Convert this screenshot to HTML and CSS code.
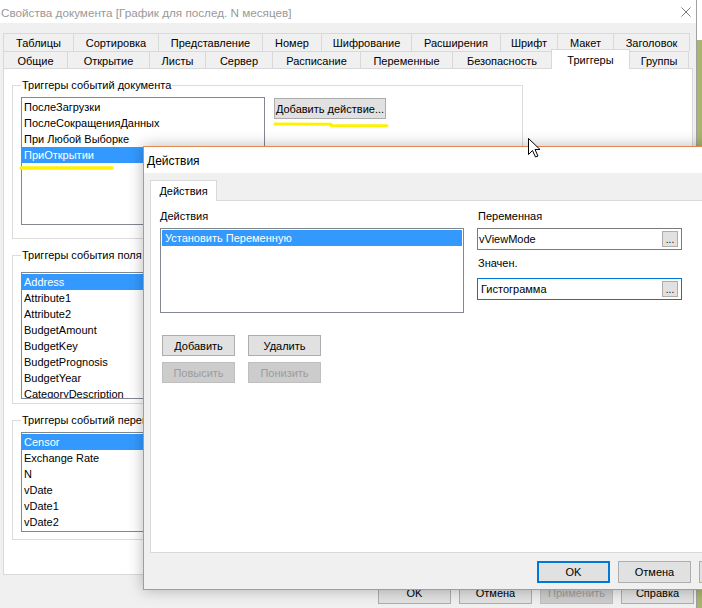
FILE: index.html
```html
<!DOCTYPE html>
<html lang="ru">
<head>
<meta charset="utf-8">
<title>Свойства документа</title>
<link rel="stylesheet" href="styles.css">
</head>
<body>
<div class="main">
  <div class="titlebar">
    <span class="title">Свойства документа [График для послед. N месяцев]</span>
    <svg class="close" width="10" height="10" viewBox="0 0 10 10"><path d="M0.5 0.5 L9.5 9.5 M9.5 0.5 L0.5 9.5" stroke="#7a7a7a" stroke-width="1" fill="none"/></svg>
  </div>
  <div class="mbody">
    <div class="tabrow row1">
      <div class="tab">Таблицы</div>
      <div class="tab">Сортировка</div>
      <div class="tab">Представление</div>
      <div class="tab">Номер</div>
      <div class="tab">Шифрование</div>
      <div class="tab">Расширения</div>
      <div class="tab">Шрифт</div>
      <div class="tab">Макет</div>
      <div class="tab last">Заголовок</div>
    </div>
    <div class="tabrow row2">
      <div class="tab">Общие</div>
      <div class="tab">Открытие</div>
      <div class="tab">Листы</div>
      <div class="tab">Сервер</div>
      <div class="tab">Расписание</div>
      <div class="tab">Переменные</div>
      <div class="tab">Безопасность</div>
      <div class="tab active">Триггеры</div>
      <div class="tab last">Группы</div>
    </div>
    <div class="panel">
      <fieldset class="grp g1">
        <legend>Триггеры событий документа</legend>
        <div class="grow">
          <div class="list l1">
            <div class="item">ПослеЗагрузки</div>
            <div class="item">ПослеСокращенияДанных</div>
            <div class="item">При Любой Выборке</div>
            <div class="item hl">ПриОткрытии</div>
          </div>
          <button class="btn addact">Добавить действие...</button>
        </div>
      </fieldset>
      <fieldset class="grp g2">
        <legend>Триггеры события поля</legend>
        <div class="list l2">
          <div class="item hl">Address</div>
          <div class="item">Attribute1</div>
          <div class="item">Attribute2</div>
          <div class="item">BudgetAmount</div>
          <div class="item">BudgetKey</div>
          <div class="item">BudgetPrognosis</div>
          <div class="item">BudgetYear</div>
          <div class="item">CategoryDescription</div>
        </div>
      </fieldset>
      <fieldset class="grp g3">
        <legend>Триггеры событий переменных</legend>
        <div class="list l3">
          <div class="item hl">Censor</div>
          <div class="item">Exchange Rate</div>
          <div class="item">N</div>
          <div class="item">vDate</div>
          <div class="item">vDate1</div>
          <div class="item">vDate2</div>
        </div>
      </fieldset>
    </div>
    <div class="mbuttons">
      <button class="btn mb">OK</button>
      <button class="btn mb">Отмена</button>
      <button class="btn mb dis">Применить</button>
      <button class="btn mb">Справка</button>
    </div>
  </div>
</div>

<div class="dlg">
  <div class="dtitle">Действия</div>
  <div class="dbody">
    <div class="dtabs"><div class="dtab">Действия</div></div>
    <div class="dpanel">
      <div class="dcols">
        <div class="dleft">
          <div class="lbl">Действия</div>
          <div class="list dlist">
            <div class="item hl">Установить Переменную</div>
          </div>
          <div class="dbtns">
            <button class="btn db">Добавить</button>
            <button class="btn db">Удалить</button>
            <button class="btn db dis">Повысить</button>
            <button class="btn db dis">Понизить</button>
          </div>
        </div>
        <div class="dright">
          <div class="lbl">Переменная</div>
          <div class="field f1"><span>vViewMode</span><span class="ell">...</span></div>
          <div class="lbl l2lbl">Значен.</div>
          <div class="field f2"><span>Гистограмма</span><span class="ell">...</span></div>
        </div>
      </div>
    </div>
    <div class="dbuttons">
      <button class="btn dfb ok">OK</button>
      <button class="btn dfb">Отмена</button>
      <button class="btn dfb" aria-label="Справка"></button>
    </div>
  </div>
</div>

<svg class="overlay" width="702" height="608" viewBox="0 0 702 608">
  <path d="M21 168 L112 168" stroke="#fff200" stroke-width="3.5" stroke-linecap="round" fill="none"/>
  <path d="M275 124 L331 124.3 M331 125.6 L387 125.8" stroke="#fff200" stroke-width="3" stroke-linecap="round" fill="none"/>
  <path d="M528.5 138.5 L528.5 154.5 L532.5 150.5 L535.5 157 L538 156 L535 149.5 L540 149.5 Z" fill="#fff" stroke="#000" stroke-width="1" stroke-linejoin="miter"/>
</svg>
</body>
</html>
```

FILE: styles.css
```css
* { box-sizing: border-box; }
html, body { margin: 0; padding: 0; }
body {
  width: 702px;
  height: 608px;
  overflow: hidden;
  position: relative;
  background: linear-gradient(#ffffff 0 40px, #a9b56f 40px);
  font-family: "Liberation Sans", Arial, sans-serif;
  font-size: 11px;
  color: #000;
}

/* main window */
.main {
  position: absolute;
  left: 0;
  top: 0;
  width: 697px;
  height: 612px;
  background: #f0f0f0;
  border-right: 1px solid #a0a0a0;
}
.titlebar {
  height: 23px;
  background: #fff;
  display: flex;
  align-items: center;
  justify-content: space-between;
  padding: 1px 5px 0 1px;
  font-size: 11.7px;
  color: #999;
  white-space: nowrap;
}
.mbody { padding: 10px 3px 0 3px; }

.tabrow { display: grid; }
.row1 { grid-template-columns: 70px 85px 104px 59px 90px 89px 57px 56px 77px; height: 18px; }
.row2 { grid-template-columns: 64px 82px 56px 67px 88px 92px 99px 78px 60px; height: 17px; }
.tab {
  border-left: 1px solid #d9d9d9;
  border-top: 1px solid #d9d9d9;
  background: #f0f0f0;
  display: flex;
  align-items: center;
  justify-content: center;
  white-space: nowrap;
}
.row1 .tab { padding-top: 1px; }
.row2 .tab { padding-top: 2px; }
.tab.last { border-right: 1px solid #d9d9d9; }
.row2 .tab.active {
  background: #fff;
  border-right: 1px solid #d9d9d9;
  margin: -2px -1px -1px 0;
  padding-top: 0;
  position: relative;
  z-index: 1;
}

.panel {
  height: 507px;
  background: #fff;
  border: 1px solid #d9d9d9;
  padding: 0 0 0 8px;
  display: flex;
  flex-direction: column;
  align-items: flex-start;
}
.grp {
  margin: 10px 0 0 0;
  border: 1px solid #dcdcdc;
  width: 511px;
  min-width: 0;
  padding: 0 8px 0 8px;
}
.grp legend { padding: 0 1px; line-height: 13px; white-space: nowrap; }
.g1 { padding-top: 5px; padding-bottom: 13px; }
.g2 { padding-top: 10px; padding-bottom: 4px; }
.g3 { padding-top: 5px; padding-bottom: 7px; }

.grow { display: flex; align-items: flex-start; }

.list {
  border: 1px solid #828790;
  background: #fff;
  padding-top: 1px;
  overflow: hidden;
}
.l1 { width: 244px; height: 128px; }
.l2 { width: 244px; height: 127px; }
.l3 { width: 244px; height: 100px; }
.item {
  height: 16px;
  line-height: 16px;
  padding-left: 2px;
  white-space: nowrap;
}
.item.hl { background: #3399ff; color: #fff; }

.btn {
  font-family: inherit;
  font-size: 11px;
  color: #000;
  background: #e1e1e1;
  border: 1px solid #adadad;
  padding: 0;
  margin: 0;
  white-space: nowrap;
  overflow: hidden;
  text-align: center;
}
.btn.dis { background: #cccccc; border-color: #bfbfbf; color: #9d9d9d; }
.addact { width: 112px; height: 21px; margin: 1px 0 0 9px; }

.mbuttons {
  display: flex;
  justify-content: flex-end;
  gap: 8px;
  margin: 6px -1px 0 0;
}
.mb { width: 73px; height: 23px; }

/* dialog window */
.dlg {
  position: absolute;
  left: 143px;
  top: 146px;
  width: 620px;
  height: 444px;
  border: 1px solid #e08a52;
  background: #f0f0f0;
  box-shadow: 0 0 14px rgba(0, 0, 0, 0.28);
  display: flex;
  flex-direction: column;
  z-index: 5;
}
.dtitle {
  height: 26px;
  background: #fff;
  font-size: 12px;
  padding: 1px 0 0 3px;
  display: flex;
  align-items: center;
}
.dbody {
  flex: 1;
  padding: 7px 8px 0 6px;
  display: flex;
  flex-direction: column;
}
.dtabs { display: flex; height: 20px; }
.dtab {
  width: 67px;
  height: 21px;
  border: 1px solid #d9d9d9;
  border-bottom: none;
  background: #fff;
  position: relative;
  z-index: 1;
  display: flex;
  align-items: center;
  justify-content: center;
}
.dpanel {
  height: 353px;
  background: #fff;
  border: 1px solid #d9d9d9;
  padding: 9px 0 0 9px;
}
.dcols { display: flex; gap: 13px; align-items: flex-start; }
.dleft { width: 304px; }
.lbl { line-height: 13px; height: 13px; white-space: nowrap; }
.dlist { width: 304px; height: 85px; margin-top: 5px; padding: 1px; }
.dlist .item { padding-left: 3px; }
.dbtns {
  display: grid;
  grid-template-columns: 73px 73px;
  column-gap: 13px;
  row-gap: 6px;
  margin: 22px 0 0 2px;
}
.db { height: 21px; }

.dright { width: 205px; }
.dright .lbl { padding-left: 1px; }
.field {
  height: 22px;
  border: 1px solid #7a7a7a;
  background: #fff;
  display: flex;
  align-items: center;
  justify-content: space-between;
  padding: 0 3px 0 1px;
  font-size: 11px;
}
.f1 { margin-top: 5px; }
.l2lbl { margin-top: 7px; }
.f2 { margin-top: 8px; border-color: #0078d7; padding-left: 3px; }
.ell {
  width: 16px;
  height: 16px;
  border: 1px solid #adadad;
  background: #e1e1e1;
  font-size: 10px;
  line-height: 16px;
  text-align: center;
}

.dbuttons {
  display: flex;
  gap: 8px;
  margin-top: 8px;
  padding-left: 387px;
}
.dfb { width: 73px; height: 22px; flex: none; }
.dfb.ok { border: 2px solid #0078d7; }

.overlay {
  position: absolute;
  left: 0;
  top: 0;
  z-index: 10;
  pointer-events: none;
}
```
